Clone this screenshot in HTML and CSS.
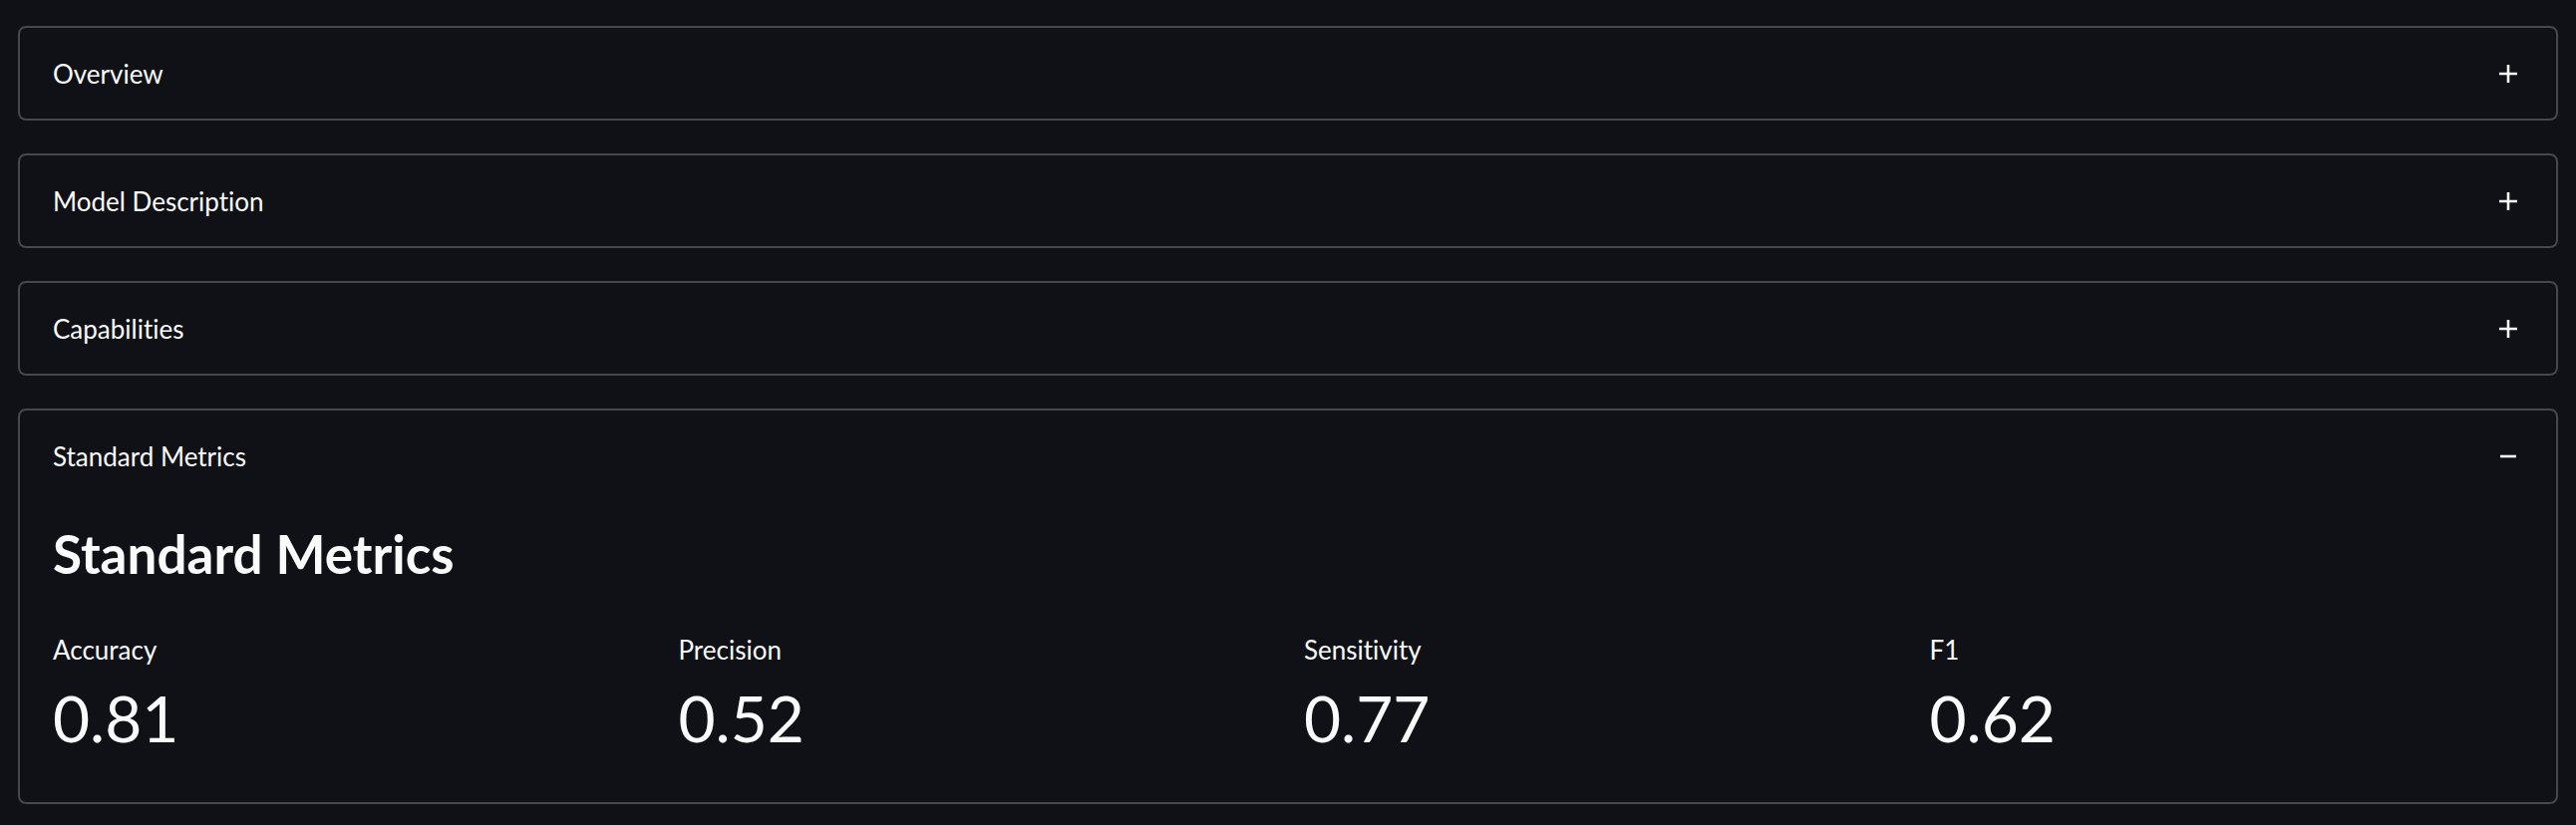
FILE: index.html
```html
<!DOCTYPE html>
<html>
<head>
<meta charset="utf-8">
<link rel="stylesheet" href="styles.css">
</head>
<body>
<main class="page">
  <section class="expander">
    <div class="summary"><span class="label">Overview</span>
      <svg class="icon" viewBox="0 0 24 24"><path d="M12 3v18M3 12h18"/></svg></div>
  </section>
  <section class="expander">
    <div class="summary"><span class="label">Model Description</span>
      <svg class="icon" viewBox="0 0 24 24"><path d="M12 3v18M3 12h18"/></svg></div>
  </section>
  <section class="expander">
    <div class="summary"><span class="label">Capabilities</span>
      <svg class="icon" viewBox="0 0 24 24"><path d="M12 3v18M3 12h18"/></svg></div>
  </section>
  <section class="expander open">
    <div class="summary"><span class="label">Standard Metrics</span>
      <svg class="icon" viewBox="0 0 24 24"><path d="M4 12h16"/></svg></div>
    <div class="body">
      <h3 class="heading">Standard Metrics</h3>
      <div class="metrics">
        <div class="metric"><div class="m-label">Accuracy</div><div class="m-value">0.81</div></div>
        <div class="metric"><div class="m-label">Precision</div><div class="m-value">0.52</div></div>
        <div class="metric"><div class="m-label">Sensitivity</div><div class="m-value">0.77</div></div>
        <div class="metric"><div class="m-label">F1</div><div class="m-value">0.62</div></div>
      </div>
    </div>
  </section>
</main>
</body>
</html>
```
FILE: styles.css
```css
html, body {
  margin: 0;
  padding: 0;
  background: #0f1116;
}
body {
  font-family: Lato, "Noto Sans", sans-serif;
  font-variant-ligatures: none;
  color: #fafafa;
}
.page {
  display: flex;
  flex-direction: column;
  gap: 33px;
  padding: 26px 18px 0 18px;
}
.expander {
  border: 2px solid #46484d;
  border-radius: 8px;
}
.summary {
  height: 91px;
  display: flex;
  align-items: center;
  justify-content: space-between;
  padding: 0 36px 0 33px;
}
.label {
  font-size: 26px;
  line-height: 32px;
}
.icon {
  width: 24px;
  height: 24px;
  fill: none;
  stroke: #fafafa;
  stroke-width: 2.6;
}
.body {
  padding: 22px 33px 44px 33px;
}
.heading {
  margin: 0;
  font-size: 53px;
  line-height: 62px;
  font-weight: 700;
}
.metrics {
  margin-top: 50px;
  display: grid;
  grid-template-columns: repeat(4, 1fr);
  column-gap: 32px;
}
.m-label {
  font-size: 26px;
  line-height: 30px;
}
.m-value {
  margin-top: 14px;
  font-size: 64px;
  line-height: 80px;
}
```
